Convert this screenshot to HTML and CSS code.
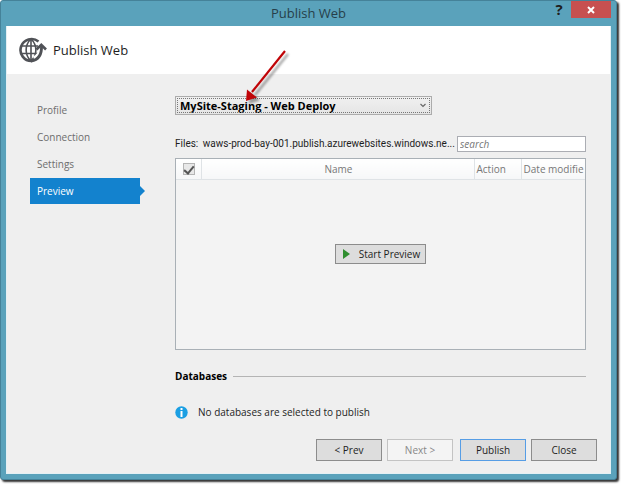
FILE: index.html
```html
<!DOCTYPE html>
<html lang="en">
<head>
<meta charset="utf-8">
<title>Publish Web</title>
<link rel="stylesheet" href="styles.css">
</head>
<body>
<div class="window">
  <div class="titlebar">
    <div class="caption">Publish Web</div>
    <div class="window-controls">
      <button class="help" type="button" aria-label="Help">?</button>
      <button class="shut" type="button" aria-label="Close window">
        <svg width="8" height="8" viewBox="0 0 8 8"><path d="M1 1l6 6M7 1L1 7" stroke="#fff" stroke-width="2"/></svg>
      </button>
    </div>
  </div>
  <div class="client">
    <header class="header">
      <svg width="28" height="26" viewBox="0 0 28 26" fill="none" stroke="#505257">
        <path d="M19.500 4.500A11 11 0 1 0 13 24" stroke-width="2.600"/>
        <path d="M12 2v22M2 9h17M2 16.500h17" stroke-width="1.600"/>
        <path d="M12 2C5.500 8 5.500 18 12 24M12 2C18.500 8 18.500 18 12 24" stroke-width="1.600"/>
        <path d="M15 22C20 20 22.500 16 22.500 9" stroke="#fff" stroke-width="5.500"/>
        <path d="M12 24C19.500 23 23 17 22.500 8" stroke-width="2.800"/>
        <path d="M17.500 12.500L22.300 7.800L27 12.500" stroke-width="2.600"/>
      </svg>
      <h1>Publish Web</h1>
    </header>
    <div class="body">
      <nav class="steps">
        <a href="#profile">Profile</a>
        <a href="#connection">Connection</a>
        <a href="#settings">Settings</a>
        <a class="current" href="#preview" aria-current="step">Preview</a>
      </nav>
      <main class="main">
        <div class="profile">
          <select aria-label="Publish profile"><option>MySite-Staging - Web Deploy</option></select>
          <svg class="chevron" width="6" height="5" viewBox="0 0 6 5"><path d="M.5 1L3 3.500L5.500 1" fill="none" stroke="#666" stroke-width="1.200"/></svg>
          <svg class="pointer" width="54" height="62" viewBox="0 0 54 62">
            <defs><filter id="soft" x="-20%" y="-20%" width="140%" height="140%"><feGaussianBlur stdDeviation="1.200"/></filter></defs>
            <g transform="translate(3 3)" opacity=".35" filter="url(#soft)"><path d="M43 5L10 46" stroke="#000" stroke-width="2.500"/><path d="M4 55L5 43.500L15 51.500Z"/></g>
            <path d="M43 5L10 46" stroke="#c00407" stroke-width="2.200"/>
            <path d="M4 55L5 43.500L15 51.500Z" fill="#c00407"/>
          </svg>
        </div>
        <div class="files">
          <div class="path"><span>Files:</span> waws-prod-bay-001.publish.azurewebsites.windows.ne...</div>
          <input type="text" placeholder="search" aria-label="search">
        </div>
        <div class="listing">
          <table>
            <thead>
              <tr>
                <th class="pick"><label><input type="checkbox" checked aria-label="Select all files"></label></th>
                <th class="name">Name</th>
                <th class="action">Action</th>
                <th class="date">Date modifie</th>
              </tr>
            </thead>
          </table>
          <button class="start" type="button">
            <svg width="7" height="10" viewBox="0 0 7 10"><path d="M0 0L7 5L0 10Z" fill="#2f8e2f"/></svg>
            Start Preview
          </button>
        </div>
        <h2>Databases</h2>
        <p class="info">
          <svg width="13" height="13" viewBox="0 0 13 13"><circle cx="6.500" cy="6.500" r="6.200" fill="#1b9fe3"/><path d="M6.500 2v2M6.500 5v6" stroke="#fff" stroke-width="2"/></svg>
          No databases are selected to publish
        </p>
      </main>
    </div>
    <footer class="footer">
      <div class="pair">
        <button type="button">&lt; Prev</button>
        <button type="button" disabled>Next &gt;</button>
      </div>
      <div class="pair">
        <button class="primary" type="button">Publish</button>
        <button type="button">Close</button>
      </div>
    </footer>
  </div>
</div>
</body>
</html>
```
FILE: styles.css
```css
* {
  box-sizing: border-box;
}

body {
  margin: 0;
  min-height: 100vh;
  padding: 0 4px 4px 0;
  display: flex;
  background: #fff;
  color: #1e1e1e;
  font: 10px/16px "Open Sans", "Noto Sans", sans-serif;
}

button,
input,
select {
  font: inherit;
  color: inherit;
  margin: 0;
}

.window {
  flex: 1;
  min-width: 0;
  display: flex;
  flex-direction: column;
  padding: 0 5px 5px;
  background: #5aa2bb;
  border: 1px solid #458299;
  border-radius: 3px;
  box-shadow: 2px 2px 2px #333;
}

.titlebar {
  height: 25px;
  display: grid;
  grid-template-columns: 1fr auto 1fr;
}

.caption {
  grid-column: 2;
  font-size: 13px;
  line-height: 25px;
  color: #263f4a;
}

.window-controls {
  display: flex;
  justify-content: flex-end;
  align-items: flex-start;
}

.window-controls button {
  border: 0;
  padding: 0;
  height: 17px;
  background: none;
}

.window-controls .help {
  width: 24px;
  font-size: 15px;
  font-weight: 700;
  line-height: 17px;
}

.window-controls .shut {
  width: 40px;
  display: grid;
  place-items: center;
  background: #c75050;
}

.client {
  flex: 1;
  display: flex;
  flex-direction: column;
  background: #efefef;
  border: solid #e4f0f4;
  border-width: 0 1px 1px;
}

.header {
  height: 48px;
  display: flex;
  align-items: center;
  gap: 6px;
  padding-left: 12px;
  background: #fff;
}

h1 {
  margin: 0;
  font-size: 13px;
  line-height: 20px;
  font-weight: 400;
}

.body {
  flex: 1;
  display: grid;
  grid-template-columns: 110px 1fr;
  gap: 35px;
  padding: 22px 24px 0 23px;
}

.steps {
  display: flex;
  flex-direction: column;
  gap: 1px;
  padding-top: 1px;
}

.steps a {
  padding: 0 7px;
  line-height: 26px;
  color: #6d6d6d;
  text-decoration: none;
}

.steps .current {
  position: relative;
  background: #1382ce;
  color: #fff;
}

.steps .current::after {
  content: "";
  position: absolute;
  left: 100%;
  top: 8px;
  border: 5px solid transparent;
  border-left-color: #1382ce;
  border-right: 0;
}

.main {
  min-width: 0;
}

.profile {
  position: relative;
  width: 257px;
}

.profile select {
  display: block;
  width: 100%;
  height: 19px;
  padding: 0 4px;
  appearance: none;
  border: 1px solid #acacac;
  border-radius: 0;
  background: linear-gradient(#f0f0f0, #e5e5e5);
  outline: 1px dotted #777;
  outline-offset: -3px;
  font-size: 11px;
  font-weight: 700;
  color: #000;
}

.chevron {
  position: absolute;
  right: 6px;
  top: 7px;
}

.pointer {
  position: absolute;
  left: 67px;
  top: -50px;
}

.files {
  display: flex;
  align-items: center;
  margin-top: 21px;
}

.path {
  flex: 1;
  overflow: hidden;
  font-family: Roboto, "Open Sans", sans-serif;
  text-overflow: ellipsis;
  white-space: nowrap;
}

.path span {
  margin-right: 2px;
}

.files input {
  width: 129px;
  height: 16px;
  padding: 0 2px;
  border: 1px solid #abadb3;
  background: #fff;
}

.files input::placeholder {
  color: #777;
  font-style: italic;
}

.listing {
  display: grid;
  height: 192px;
  margin-top: 6px;
  border: 1px solid #a9b0b6;
  background: #f3f3f3;
  overflow: hidden;
}

.listing > * {
  grid-area: 1 / 1;
}

table {
  width: 100%;
  align-self: start;
  table-layout: fixed;
  border-collapse: collapse;
}

th {
  height: 20px;
  padding: 0 0 0 2px;
  border: solid #dfe3e6;
  border-width: 0 1px 1px 0;
  background: linear-gradient(#fff, #f6f7f8);
  color: #777;
  font-weight: 400;
  text-align: left;
  white-space: nowrap;
}

.pick {
  width: 25px;
}

th.name {
  text-align: center;
}

.action {
  width: 47px;
}

.date {
  width: 64px;
  border-right: 0;
}

.pick label {
  display: grid;
  place-items: center;
}

.pick input {
  display: grid;
  place-items: center;
  width: 12px;
  height: 12px;
  appearance: none;
  border: 1px solid #b5b5b5;
  background: #e8e8e8;
}

.pick input:checked::after {
  content: "";
  width: 4px;
  height: 8px;
  border: solid #555;
  border-width: 0 2px 2px 0;
  transform: rotate(40deg);
}

.start,
.footer button {
  border: 1px solid #8c8c8c;
  background: #dddddd;
}

.start {
  place-self: center;
  display: flex;
  align-items: center;
  gap: 9px;
  height: 20px;
  padding: 0 5px 0 7px;
}

h2 {
  display: flex;
  align-items: center;
  gap: 6px;
  margin: 18px 0 0;
  font-size: 10px;
  line-height: 16px;
  color: #000;
}

h2::after {
  content: "";
  flex: 1;
  height: 1px;
  background: #b4b4b4;
}

.info {
  display: flex;
  align-items: center;
  gap: 10px;
  margin: 20px 0 0;
}

.footer {
  display: flex;
  justify-content: flex-end;
  gap: 7px;
  padding: 0 13px 12px 0;
}

.pair {
  display: flex;
  gap: 5px;
}

.footer button {
  width: 66px;
  height: 22px;
  padding: 0;
}

.footer button:disabled {
  border-color: #c3c3c3;
  background: #f4f4f4;
  color: #888;
}

.footer .primary {
  border-color: #569de5;
}
```
